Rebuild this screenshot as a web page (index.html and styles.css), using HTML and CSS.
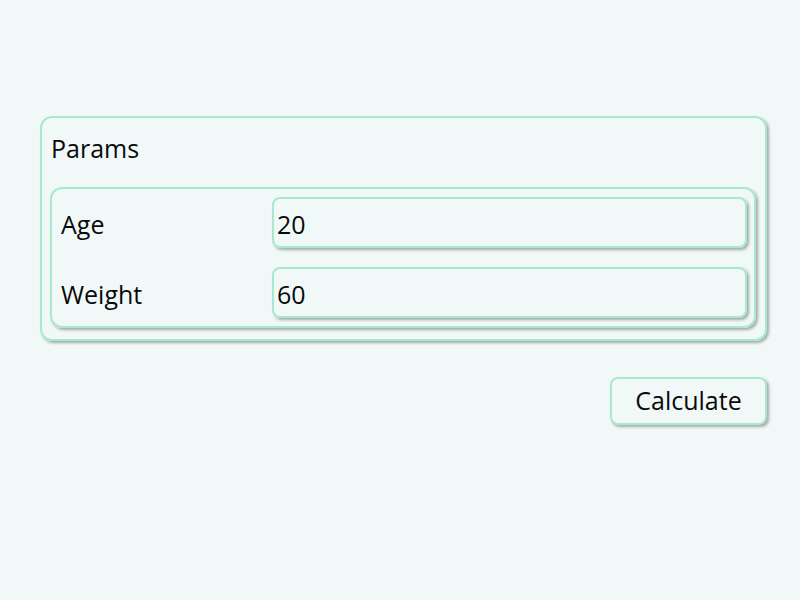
FILE: index.html
```html
<!DOCTYPE html>
<html>
<head>
<meta charset="utf-8">
<link rel="stylesheet" href="styles.css">
</head>
<body>
<div class="page">
  <section class="group">
    <div class="group-title">Params</div>
    <div class="fields">
      <label class="field-label">Age</label>
      <div class="field-input">20</div>
      <label class="field-label">Weight</label>
      <div class="field-input">60</div>
    </div>
  </section>
  <div class="actions">
    <button class="btn">Calculate</button>
  </div>
</div>
</body>
</html>
```

FILE: styles.css
```css
* { box-sizing: border-box; }
html, body {
  margin: 0;
  padding: 0;
  background: #f1f9f8;
  font-family: "Open Sans", "Noto Sans", sans-serif;
  color: #0a0a0a;
}
.page {
  width: 800px;
  height: 600px;
  padding: 116px 0 0 40px;
}
.group {
  width: 727px;
  height: 225px;
  border: 2px solid #a6e9cd;
  border-radius: 12px;
  box-shadow: 2px 2px 3px rgba(0,0,0,0.32);
  padding: 0 9px 0 8px;
  display: flex;
  flex-direction: column;
}
.group-title {
  height: 69px;
  padding: 14px 0 0 1px;
  font-size: 25px;
  line-height: 32px;
}
.fields {
  border: 2px solid #a6e9cd;
  border-radius: 12px;
  box-shadow: 2px 2px 3px rgba(0,0,0,0.32);
  padding: 8px 7px 8px 9px;
  display: grid;
  grid-template-columns: 211px 1fr;
  grid-auto-rows: 51px;
  row-gap: 19px;
  align-items: center;
}
.field-label {
  font-size: 25px;
  line-height: 32px;
  padding-top: 2px;
}
.field-input {
  height: 51px;
  border: 2px solid #a6e9cd;
  border-radius: 8px;
  box-shadow: 2px 2px 3px rgba(0,0,0,0.32);
  padding: 9px 0 0 3px;
  font-size: 25px;
  line-height: 32px;
}
.actions {
  width: 727px;
  margin-top: 36px;
  display: flex;
  justify-content: flex-end;
}
.btn {
  width: 157px;
  height: 48px;
  border: 2px solid #a6e9cd;
  border-radius: 8px;
  box-shadow: 2px 2px 3px rgba(0,0,0,0.32);
  background: #f1f9f8;
  font-family: "Open Sans", "Noto Sans", sans-serif;
  font-size: 25px;
  line-height: 32px;
  color: #0a0a0a;
  padding: 0 0 2px 0;
}
```
